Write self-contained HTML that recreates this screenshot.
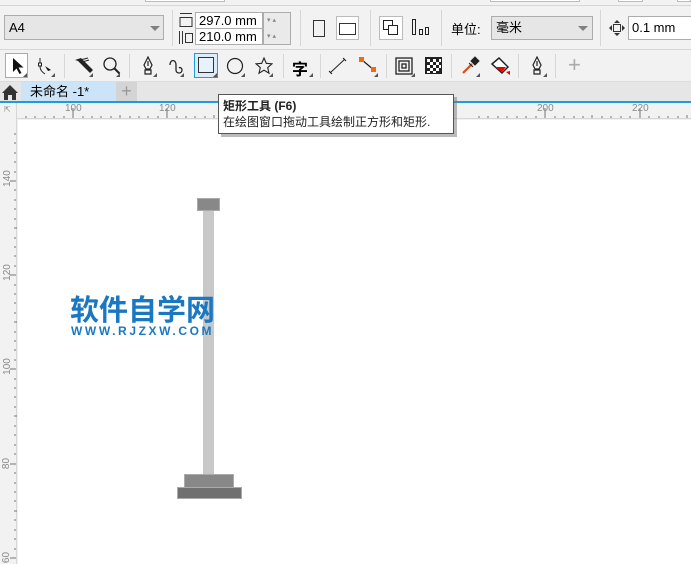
<!DOCTYPE html>
<html><head><meta charset="utf-8"><style>
*{margin:0;padding:0;box-sizing:border-box}
body{width:691px;height:564px;overflow:hidden;background:#f2f2f2;font-family:"Liberation Sans","Noto Sans CJK SC",sans-serif;position:relative;font-size:12px;color:#000}
.a{position:absolute}
.sep{position:absolute;width:1px;background:#d6d6d6}
.inp{position:absolute;background:#fff;border:1px solid #acacac;font-size:13px;padding-left:3px;line-height:15px}
.dd{position:absolute;background:#e6e6e6;border:1px solid #acacac;font-size:13px;padding-left:4px}
.tri{position:absolute;width:0;height:0;border-left:5px solid transparent;border-right:5px solid transparent;border-top:5px solid #808080}
.ct{position:absolute;width:0;height:0;border-left:4px solid transparent;border-bottom:4px solid #555}
.rl{position:absolute;color:#8a8a8a;font-size:10px}
</style></head><body>
<div class="a" style="left:0;top:0;width:691px;height:6px;border-bottom:1px solid #d6d6d6"></div>
<div class="a" style="left:145px;top:0;width:80px;height:2px;border:1px solid #bbb;border-top:none;background:#fff"></div>
<div class="a" style="left:490px;top:0;width:90px;height:2px;border:1px solid #bbb;border-top:none;background:#fff"></div>
<div class="a" style="left:618px;top:0;width:25px;height:2px;border:1px solid #bbb;border-top:none;background:#fff"></div>
<div class="a" style="left:677px;top:0;width:14px;height:2px;border:1px solid #bbb;border-top:none;background:#fff"></div>
<div class="dd" style="left:4px;top:15px;width:160px;height:25px;line-height:23px">A4</div>
<div class="tri" style="left:150px;top:26px"></div>
<div class="sep" style="left:172px;top:10px;height:36px"></div>
<svg class="a" style="left:178px;top:12px" width="16" height="34"><g fill="none" stroke="#333"><path d="M2 1.5h12M2 5.5h12v9H2z"/><path d="M1.5 19v13M4.5 19v13M7.5 21.5h7v9h-7z"/></g></svg>
<div class="inp" style="left:195px;top:12px;width:68px;height:17px">297.0 mm</div>
<div class="inp" style="left:195px;top:28px;width:68px;height:17px">210.0 mm</div>
<div class="a" style="left:263px;top:12px;width:28px;height:33px;border:1px solid #acacac;background:#eaeaea;font-size:7px;color:#888;line-height:16px;padding-left:3px">▾ ▴<br>▾ ▴</div>
<div class="sep" style="left:300px;top:10px;height:36px"></div>
<div class="a" style="left:313px;top:20px;width:12px;height:17px;border:1.5px solid #333"></div>
<div class="a" style="left:336px;top:16px;width:23px;height:24px;border:1px solid #bbb;background:#fff"></div>
<div class="a" style="left:339px;top:23px;width:17px;height:12px;border:1.5px solid #333"></div>
<div class="sep" style="left:370px;top:10px;height:36px"></div>
<div class="a" style="left:379px;top:16px;width:24px;height:24px;border:1px solid #bbb;background:#fff"></div>
<svg class="a" style="left:382px;top:19px" width="18" height="18"><g fill="#fff" stroke="#222"><rect x="1.5" y="1.5" width="9" height="9"/><rect x="6.5" y="6.5" width="9" height="9"/></g></svg>
<svg class="a" style="left:411px;top:18px" width="18" height="18"><g fill="none" stroke="#222"><rect x="1.5" y="1.5" width="3" height="15"/><rect x="8.5" y="11.5" width="3" height="5"/><rect x="14.5" y="9.5" width="3" height="7"/></g></svg>
<div class="sep" style="left:441px;top:10px;height:36px"></div>
<div class="a" style="left:451px;top:19px;font-size:13px">单位:</div>
<div class="dd" style="left:491px;top:16px;width:102px;height:24px;line-height:22px">毫米</div>
<div class="tri" style="left:578px;top:26px"></div>
<div class="sep" style="left:600px;top:10px;height:36px"></div>
<svg class="a" style="left:609px;top:20px" width="16" height="16"><g fill="#333"><path d="M8 0l3 3H5zM8 16l3-3H5zM0 8l3-3v6zM16 8l-3-3v6z"/></g><rect x="4.5" y="4.5" width="7" height="7" fill="none" stroke="#333"/></svg>
<div class="inp" style="left:628px;top:16px;width:70px;height:24px;line-height:22px;font-size:13px">0.1 mm</div>
<div class="a" style="left:0;top:49px;width:691px;height:1px;background:#d6d6d6"></div>
<div class="a" style="left:5px;top:53px;width:23px;height:25px;background:#fff;border:1px solid #aaa"></div>
<svg class="a" style="left:11px;top:57px" width="14" height="18"><path d="M2 1v14l3.5-3.5 3 5.5 2-1-3-5.5h5z" fill="#111"/></svg>
<div class="ct" style="left:23px;top:73px"></div>
<svg class="a" style="left:36px;top:56px" width="20" height="20"><g fill="none" stroke="#222"><path d="M4 2v5M4 10c0 4 2 6 5 8"/><rect x="2.5" y="7" width="3" height="3"/></g><path d="M9 10l6 4-3 1z" fill="#111"/></svg>
<div class="ct" style="left:51px;top:73px"></div>
<div class="sep" style="left:64px;top:54px;height:24px"></div>
<svg class="a" style="left:73px;top:56px" width="22" height="20"><path d="M2 4l6-2 12 12-3 3L5 5z" fill="#222"/><path d="M7 4l8-2M9 6l7-2" stroke="#222" fill="none"/></svg>
<div class="ct" style="left:89px;top:73px"></div>
<svg class="a" style="left:102px;top:56px" width="20" height="20"><circle cx="8" cy="8" r="6" fill="none" stroke="#222" stroke-width="1.3"/><path d="M12.5 12.5l5 5" stroke="#222" stroke-width="2"/></svg>
<div class="ct" style="left:116px;top:73px"></div>
<div class="sep" style="left:129px;top:54px;height:24px"></div>
<svg class="a" style="left:140px;top:56px" width="16" height="20"><path d="M8 1L4 9l2 4h4l2-4zM8 5v5M5 14h6v4H5z" fill="none" stroke="#222" stroke-width="1.2"/></svg>
<div class="ct" style="left:153px;top:73px"></div>
<svg class="a" style="left:167px;top:56px" width="20" height="20"><path d="M3 9c0-6 6-6 6 0v5c0 4 6 4 6 0 0-2-2-3-3-2" fill="none" stroke="#222" stroke-width="1.3"/></svg>
<div class="ct" style="left:180px;top:73px"></div>
<div class="a" style="left:194px;top:53px;width:24px;height:25px;background:#dcecfb;border:1px solid #1e9be0"></div>
<div class="a" style="left:198px;top:57px;width:16px;height:16px;border:1.5px solid #333;background:#e8f2fc"></div>
<div class="ct" style="left:213px;top:73px"></div>
<svg class="a" style="left:226px;top:57px" width="18" height="18"><circle cx="9" cy="9" r="7.5" fill="none" stroke="#222" stroke-width="1.2"/></svg>
<div class="ct" style="left:241px;top:73px"></div>
<svg class="a" style="left:255px;top:57px" width="18" height="18"><path d="M9 1l2.3 5.3 5.7.5-4.3 3.8 1.3 5.6L9 13.2 4 16.2l1.3-5.6L1 6.8l5.7-.5z" fill="none" stroke="#222" stroke-width="1.1"/></svg>
<div class="ct" style="left:269px;top:73px"></div>
<div class="sep" style="left:283px;top:54px;height:24px"></div>
<div class="a" style="left:292px;top:56px;font-size:16px;font-weight:bold">字</div>
<div class="ct" style="left:309px;top:73px"></div>
<div class="sep" style="left:320px;top:54px;height:24px"></div>
<svg class="a" style="left:328px;top:56px" width="20" height="20"><path d="M2 17L17 3" stroke="#222"/><path d="M1 15l3 3M15 2l3 3" stroke="#222"/></svg>
<svg class="a" style="left:358px;top:56px" width="22" height="20"><path d="M4 4l12 10" stroke="#222" stroke-width="1.3"/><rect x="1" y="1" width="5" height="5" fill="#f26a10"/><rect x="13" y="11" width="5" height="5" fill="#f26a10"/></svg>
<div class="ct" style="left:374px;top:73px"></div>
<div class="sep" style="left:386px;top:54px;height:24px"></div>
<svg class="a" style="left:395px;top:57px" width="18" height="18"><g fill="none" stroke="#222" stroke-width="1.3"><rect x="1" y="1" width="16" height="16"/><rect x="4" y="4" width="10" height="10"/><rect x="7" y="7" width="4" height="4"/></g></svg>
<div class="ct" style="left:411px;top:73px"></div>
<svg class="a" style="left:425px;top:57px" width="17" height="17"><rect width="17" height="17" fill="#222"/><g fill="#fff"><rect x="2" y="2" width="3" height="3"/><rect x="8" y="2" width="3" height="3"/><rect x="5" y="5" width="3" height="3"/><rect x="11" y="5" width="3" height="3"/><rect x="2" y="8" width="3" height="3"/><rect x="8" y="8" width="3" height="3"/><rect x="5" y="11" width="3" height="3"/><rect x="11" y="11" width="3" height="3"/><rect x="14" y="2" width="2" height="3"/><rect x="14" y="8" width="2" height="3"/><rect x="2" y="14" width="3" height="2"/><rect x="8" y="14" width="3" height="2"/></g></svg>
<div class="sep" style="left:451px;top:54px;height:24px"></div>
<svg class="a" style="left:460px;top:56px" width="20" height="20"><path d="M3 17l9-9" stroke="#d5501a" stroke-width="2.2"/><path d="M11 5l4-4 4 4-4 4z M9 7l4 4" fill="#222" stroke="#222"/></svg>
<div class="ct" style="left:476px;top:73px"></div>
<svg class="a" style="left:490px;top:56px" width="22" height="22"><path d="M2 8l7-6 9 9-6 6z" fill="#fff" stroke="#222" stroke-width="1.5"/><path d="M5 11h11l-4 5z" fill="#e00"/><path d="M16 16l4-1v4z" fill="#e00"/></svg>
<div class="sep" style="left:518px;top:54px;height:24px"></div>
<svg class="a" style="left:529px;top:56px" width="16" height="20"><path d="M8 1L4 9l2 4h4l2-4zM8 5v5M5 14h6v4H5z" fill="none" stroke="#222" stroke-width="1.2"/></svg>
<div class="ct" style="left:543px;top:73px"></div>
<div class="sep" style="left:555px;top:54px;height:24px"></div>
<div class="a" style="left:568px;top:53px;font-size:22px;color:#aaa;line-height:24px">+</div>
<div class="a" style="left:0;top:81px;width:691px;height:1px;background:#dcdcdc"></div>
<div class="a" style="left:0;top:82px;width:691px;height:20px;background:#e6e6e6"></div>
<svg class="a" style="left:1px;top:84px" width="18" height="16"><path d="M9 1L1 9h2v7h4v-5h4v5h4V9h2z" fill="#333"/></svg>
<div class="a" style="left:21px;top:82px;width:95px;height:19px;background:#cce4f7;font-size:13px;padding-left:9px;line-height:19px">未命名 -1*</div>
<div class="a" style="left:116px;top:82px;width:21px;height:19px;background:#d4d4d4;color:#999;font-size:18px;text-align:center;line-height:18px">+</div>
<div class="a" style="left:0;top:101px;width:691px;height:2px;background:#1e9be0"></div>
<div class="a" style="left:0;top:103px;width:691px;height:16px;background:#f2f2f2;border-bottom:1px solid #d6d6d6"></div>
<div class="a" style="left:0;top:103px;width:17px;height:461px;background:#f2f2f2;border-right:1px solid #d6d6d6"></div>
<div class="rl" style="left:4px;top:105px;font-size:8px">⇱</div>
<svg class="a" style="left:17px;top:103px" width="674" height="16"><g stroke="#777">
<path d="M56 5v10M150 5v10M528 5v10M623 5v10"/>
<path d="M9 13v2M18 13v2M28 13v2M37 13v2M47 13v2M66 13v2M75 13v2M84 13v2M94 13v2M103 12v3M113 13v2M122 13v2M131 13v2M141 13v2M160 13v2M169 13v2M178 13v2M188 13v2M197 12v3M207 13v2M462 13v2M471 13v2M481 13v2M490 13v2M500 13v2M509 13v2M519 13v2M538 13v2M547 13v2M557 13v2M566 13v2M575 12v3M585 13v2M594 13v2M604 13v2M613 13v2M632 13v2M642 13v2M651 13v2M661 13v2M670 12v3"/></g></svg>
<div class="rl" style="left:65px;top:103px">100</div>
<div class="rl" style="left:159px;top:103px">120</div>
<div class="rl" style="left:537px;top:103px">200</div>
<div class="rl" style="left:632px;top:103px">220</div>
<svg class="a" style="left:0;top:119px" width="17" height="445"><g stroke="#777"><path d="M10 62h6M10 156h6M10 250h6M10 345h6M10 439h6"/>
<path d="M14 15h2M14 24h2M14 34h2M14 43h2M14 53h2M14 71h2M14 81h2M14 90h2M14 100h2M14 109h3M14 119h2M14 128h2M14 137h2M14 147h2M14 166h2M14 175h2M14 184h2M14 194h2M14 203h3M14 213h2M14 222h2M14 231h2M14 241h2M14 260h2M14 269h2M14 278h2M14 288h2M14 297h3M14 307h2M14 316h2M14 326h2M14 335h2M14 354h2M14 364h2M14 373h2M14 382h2M14 392h3M14 401h2M14 411h2M14 420h2M14 430h2"/></g></svg>
<div class="rl" style="left:-1px;top:173px;transform:rotate(-90deg)">140</div>
<div class="rl" style="left:-1px;top:267px;transform:rotate(-90deg)">120</div>
<div class="rl" style="left:-1px;top:361px;transform:rotate(-90deg)">100</div>
<div class="rl" style="left:1px;top:458px;transform:rotate(-90deg)">80</div>
<div class="rl" style="left:1px;top:552px;transform:rotate(-90deg)">60</div>
<div class="a" style="left:18px;top:120px;width:673px;height:444px;background:#fff"></div>
<div class="a" style="left:197px;top:198px;width:23px;height:13px;background:#888;border:1px solid #aaa"></div>
<div class="a" style="left:203px;top:211px;width:11px;height:264px;background:#c8c8c8"></div>
<div class="a" style="left:184px;top:474px;width:50px;height:14px;background:#888;border:1px solid #aaa"></div>
<div class="a" style="left:177px;top:487px;width:65px;height:12px;background:#707070;border:1px solid #aaa"></div>
<div class="a" style="left:70px;top:290px;font-size:29px;font-weight:bold;color:#1a78c2;font-family:'Noto Sans CJK SC',sans-serif;line-height:36px">软件自学网</div>
<div class="a" style="left:71px;top:324px;font-size:12px;font-weight:bold;color:#1a78c2;letter-spacing:2.6px;white-space:nowrap">WWW.RJZXW.COM</div>
<div class="a" style="left:221px;top:97px;width:236px;height:40px;background:#777;opacity:.5"></div>
<div class="a" style="left:218px;top:94px;width:236px;height:40px;background:#fff;border:1px solid #555;padding:3px 0 0 4px;font-size:12px;line-height:16px;color:#222"><b>矩形工具 (F6)</b><br>在绘图窗口拖动工具绘制正方形和矩形.</div>
</body></html>
